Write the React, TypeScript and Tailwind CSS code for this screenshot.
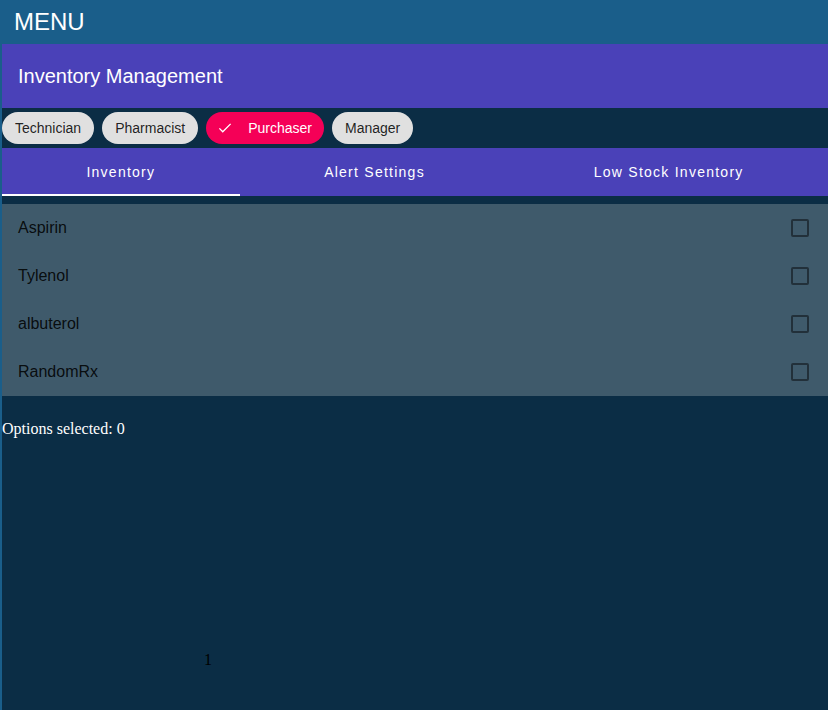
const roles = ["Technician", "Pharmacist", "Purchaser", "Manager"];
const tabs = ["Inventory", "Alert Settings", "Low Stock Inventory"];
const drugs = ["Aspirin", "Tylenol", "albuterol", "RandomRx"];

function Chip({ label, active }: { label: string; active: boolean }) {
  return (
    <div
      className={
        active
          ? "h-8 flex items-center gap-[14px] rounded-full bg-[#f50057] text-white pl-[10px] pr-3 text-sm"
          : "h-8 flex items-center rounded-full bg-[#e0e0e0] text-[rgba(0,0,0,0.87)] px-[13px] text-sm"
      }
    >
      {active && (
        <svg width="18" height="18" viewBox="0 0 24 24" fill="none">
          <path d="M4.5 12.5l4.5 4.5L19.5 6.5" stroke="white" strokeWidth="1.8" />
        </svg>
      )}
      {label}
    </div>
  );
}

export default function App() {
  return (
    <div className="w-[828px] h-[710px] bg-[#1a5e8a] flex flex-col font-['Liberation_Sans',Arial,sans-serif] overflow-hidden">
      <div className="h-11 shrink-0 flex items-center pl-[14px] text-white text-2xl">MENU</div>
      <div className="flex-1 ml-[2px] bg-[#0b2d45] flex flex-col">
        <div className="h-16 bg-[#4a41b8] flex items-center px-4 text-white text-xl">
          Inventory Management
        </div>
        <div className="h-10 flex items-center gap-2">
          {roles.map((r) => (
            <Chip key={r} label={r} active={r === "Purchaser"} />
          ))}
        </div>
        <div className="h-12 bg-[#4a41b8] flex">
          {tabs.map((t, i) => (
            <div
              key={t}
              className={
                "flex-auto px-3 pt-[2px] flex items-center justify-center text-sm tracking-[1.25px] text-white border-b-2 " +
                (i === 0 ? "border-white" : "border-transparent")
              }
            >
              {t}
            </div>
          ))}
        </div>
        <div className="mt-2 bg-[#3f5a6b]">
          {drugs.map((d) => (
            <div key={d} className="h-12 flex items-center justify-between pl-4 pr-[19px]">
              <span className="text-base text-[rgba(0,0,0,0.87)]">{d}</span>
              <div className="w-[18px] h-[18px] border-2 border-[#22303a] rounded-[2px]" />
            </div>
          ))}
        </div>
        <p className="mt-[21px] text-white font-['Liberation_Serif',serif] text-base">Options selected: 0</p>
        <p className="mt-[207px] pl-[202px] text-black font-['Liberation_Serif',serif] text-base">1</p>
      </div>
    </div>
  );
}
